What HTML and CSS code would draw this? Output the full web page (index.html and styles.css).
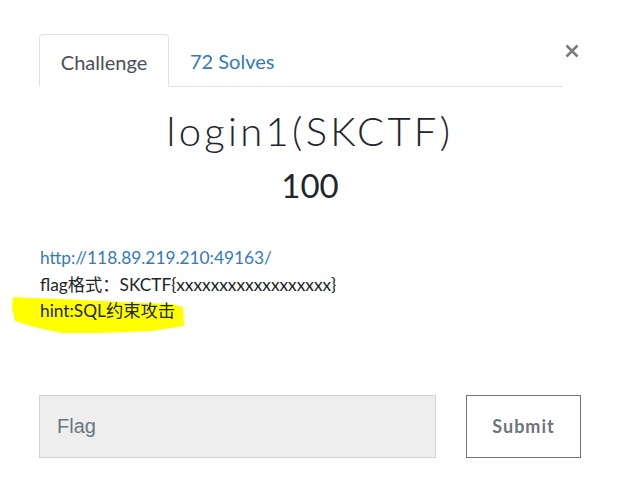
FILE: index.html
```html
<!DOCTYPE html>
<html>
<head>
<meta charset="utf-8">
<link rel="stylesheet" href="styles.css">
</head>
<body>
<div class="modal">
  <button class="close" aria-label="Close">
    <svg width="14" height="14" viewBox="0 0 14 14" aria-hidden="true">
      <path d="M1.5 1.5 L12.5 12.5 M12.5 1.5 L1.5 12.5" stroke="#7b7b7b" stroke-width="2.6" stroke-linecap="butt"/>
    </svg>
  </button>
  <ul class="tabs">
    <li class="tab active">Challenge</li>
    <li class="tab link">72 Solves</li>
  </ul>
  <h2 class="title">login1(SKCTF)</h2>
  <h3 class="value">100</h3>
  <div class="desc">
    <svg class="mark" width="180" height="42" viewBox="0 0 180 42" aria-hidden="true">
      <polygon fill="#ffff00" points="1,1 20,2 50,3 110,6 160,8 171,11 172,30 140,35 90,37 50,37 40,35 22,31 3,25 0,12"/>
    </svg>
    <a class="url" href="#">http://118.89.219.210:49163/</a>
    <p>flag格式：SKCTF{xxxxxxxxxxxxxxxxxx}</p>
    <p class="hint">hint:SQL约束攻击</p>
  </div>
  <form class="submit-row">
    <input class="flag" type="text" placeholder="Flag">
    <button class="submit" type="button">Submit</button>
  </form>
</div>
</body>
</html>
```
FILE: styles.css
```css
html, body {
  margin: 0;
  padding: 0;
  background: #fff;
}
body {
  font-family: Lato, "Noto Sans CJK SC", sans-serif;
  color: #212529;
  width: 620px;
  height: 491px;
  overflow: hidden;
}
.modal {
  position: relative;
  padding: 34px 39px 0 39px;
}
.close {
  position: absolute;
  top: 44px;
  left: 565px;
  border: 0;
  background: none;
  padding: 0;
  width: 14px;
  height: 14px;
  line-height: 0;
  cursor: pointer;
}
.tabs {
  list-style: none;
  margin: 0;
  padding: 0;
  display: flex;
  width: 524px;
  border-bottom: 1px solid #dee2e6;
  height: 52px;
}
.tab {
  font-size: 20px;
  padding: 0 21px;
  line-height: 52px;
  height: 52px;
  box-sizing: border-box;
}
.tab.active {
  color: #495057;
  border: 1px solid #dee2e6;
  border-bottom: 1px solid #fff;
  border-radius: 4px 4px 0 0;
  height: 53px;
  width: 130px;
  padding: 0;
  text-align: center;
  line-height: 54px;
}
.tab.link {
  color: #337ab7;
  padding: 0 21px;
  line-height: 54px;
}
.title {
  margin: 20px 0 0 0;
  text-align: center;
  font-weight: 300;
  font-size: 40px;
  line-height: 48px;
  letter-spacing: 3.3px;
  color: #212529;
  width: 542px;
}
.value {
  margin: 10px 0 0 0;
  text-align: center;
  font-weight: 400;
  font-size: 33px;
  line-height: 40px;
  color: #212529;
  width: 542px;
}
.desc {
  position: relative;
  margin-top: 40px;
  font-size: 17.3px;
  line-height: 26.5px;
  padding-left: 1px;
}
.desc .mark {
  position: absolute;
  left: -27px;
  top: 51px;
  z-index: 0;
}
.desc .url, .desc p {
  position: relative;
  z-index: 1;
  display: block;
  margin: 0;
}
.url {
  color: #337ab7;
  text-decoration: none;
}
.submit-row {
  display: grid;
  grid-template-columns: 397px 115px;
  column-gap: 30px;
  margin-top: 70px;
}
.flag {
  height: 63px;
  box-sizing: border-box;
  background: #eeeeee;
  border: 1px solid #cfd4da;
  padding: 0 17px;
  font-family: "Liberation Sans", sans-serif;
  font-size: 20px;
  color: #495057;
  margin: 0;
}
.flag::placeholder {
  color: #6c757d;
}
.submit {
  height: 63px;
  box-sizing: border-box;
  background: #fff;
  border: 1px solid #6c757d;
  color: #6c757d;
  font-family: Lato, sans-serif;
  font-weight: 700;
  font-size: 18px;
  letter-spacing: 1px;
  margin: 0;
  padding: 0;
}
```
